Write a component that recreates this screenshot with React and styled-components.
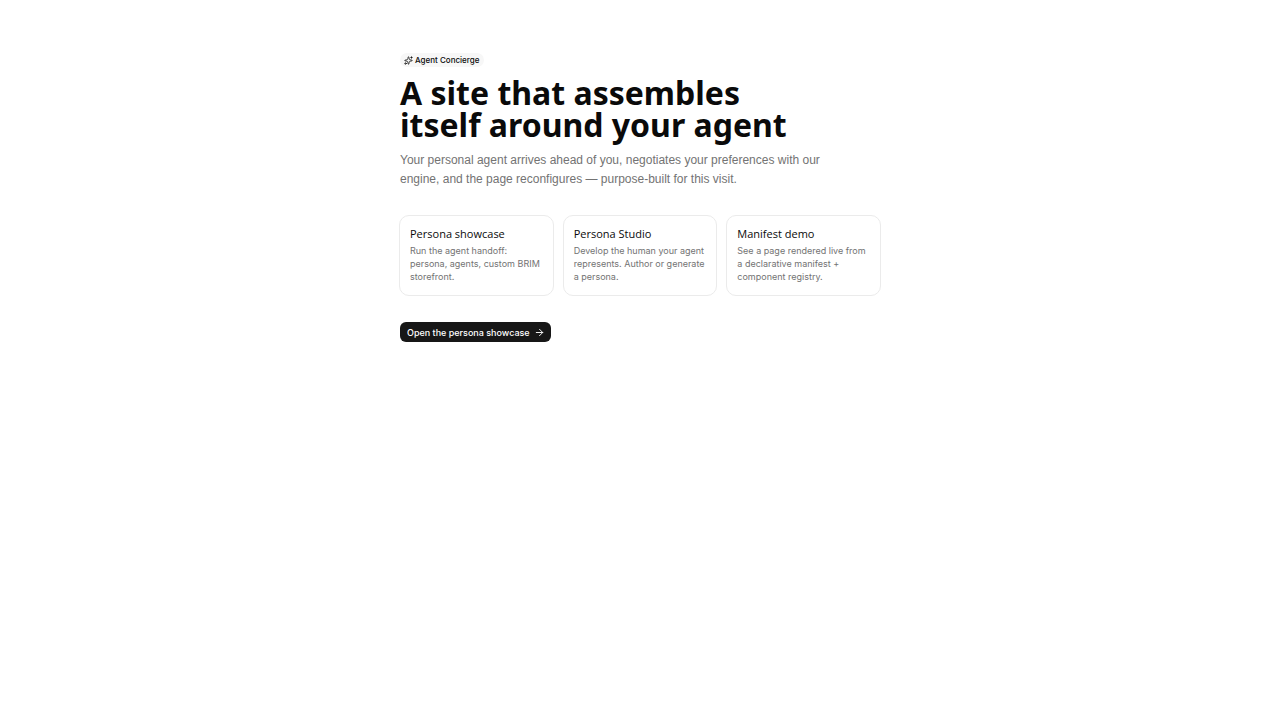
import styled, { createGlobalStyle } from "styled-components";
import { ArrowRight, Sparkles } from "lucide-react";

const cards = [
  {
    title: "Persona showcase",
    text: "Run the agent handoff: persona, agents, custom BRIM storefront.",
    href: "#showcase",
  },
  {
    title: "Persona Studio",
    text: "Develop the human your agent represents. Author or generate a persona.",
    href: "#studio",
  },
  {
    title: "Manifest demo",
    text: "See a page rendered live from a declarative manifest + component registry.",
    href: "#manifest",
  },
];

export default function App() {
  return (
    <>
      <GlobalStyle />
      <Page>
        <Hero>
          <Badge>
            <Sparkles size={9} />
            Agent Concierge
          </Badge>
          <Title>A site that assembles itself around your agent</Title>
          <Lead>
            Your personal agent arrives ahead of you, negotiates your
            preferences with our engine, and the page reconfigures —
            purpose-built for this visit.
          </Lead>
        </Hero>
        <Cards>
          {cards.map((card) => (
            <Card key={card.title} href={card.href}>
              <CardTitle>{card.title}</CardTitle>
              <CardText>{card.text}</CardText>
            </Card>
          ))}
        </Cards>
        <Button type="button">
          Open the persona showcase
          <ArrowRight size={11} />
        </Button>
      </Page>
    </>
  );
}

const GlobalStyle = createGlobalStyle`
  * {
    box-sizing: border-box;
  }

  body {
    margin: 0;
    background: #fff;
    color: #0a0a0a;
    font-family: Inter, sans-serif;
  }
`;

const Page = styled.main`
  display: flex;
  flex-direction: column;
  align-items: flex-start;
  gap: 26px;
  max-width: 482px;
  margin: 0 auto;
  padding: 53px 0;
`;

const Hero = styled.header`
  display: flex;
  flex-direction: column;
  align-items: flex-start;
  gap: 10px;
  padding-left: 1px;
`;

const Badge = styled.span`
  display: inline-flex;
  align-items: center;
  gap: 2px;
  height: 14px;
  padding: 0 5px 0 4px;
  border-radius: 7px;
  background: #f7f7f7;
  font-size: 8px;
  font-weight: 500;
`;

const Title = styled.h1`
  max-width: 400px;
  margin: 0;
  font-family: "Noto Sans", sans-serif;
  font-size: 32px;
  font-weight: 700;
  line-height: 32px;
`;

const Lead = styled.p`
  max-width: 450px;
  margin: 0;
  color: #737373;
  font-family: "Liberation Sans", sans-serif;
  font-size: 12px;
  line-height: 19px;
`;

const Cards = styled.nav`
  display: grid;
  grid-template-columns: repeat(3, 1fr);
  gap: 9px;
  width: 100%;
`;

const Card = styled.a`
  display: flex;
  flex-direction: column;
  gap: 2px;
  padding: 10px 9px 12px 10px;
  border: 1px solid #ebebeb;
  border-radius: 10px;
  color: inherit;
  text-decoration: none;
`;

const CardTitle = styled.h2`
  margin: 0;
  font-family: "Open Sans", sans-serif;
  font-size: 11px;
  font-weight: 400;
  line-height: 16px;
`;

const CardText = styled.p`
  margin: 0;
  color: #737373;
  font-size: 9px;
  line-height: 13px;
`;

const Button = styled.button`
  display: inline-flex;
  align-items: center;
  gap: 4px;
  height: 20px;
  margin-left: 1px;
  padding: 0 6px 0 7px;
  border: none;
  border-radius: 6px;
  background: #171717;
  color: #fff;
  font-family: inherit;
  font-size: 9px;
  font-weight: 500;
`;
